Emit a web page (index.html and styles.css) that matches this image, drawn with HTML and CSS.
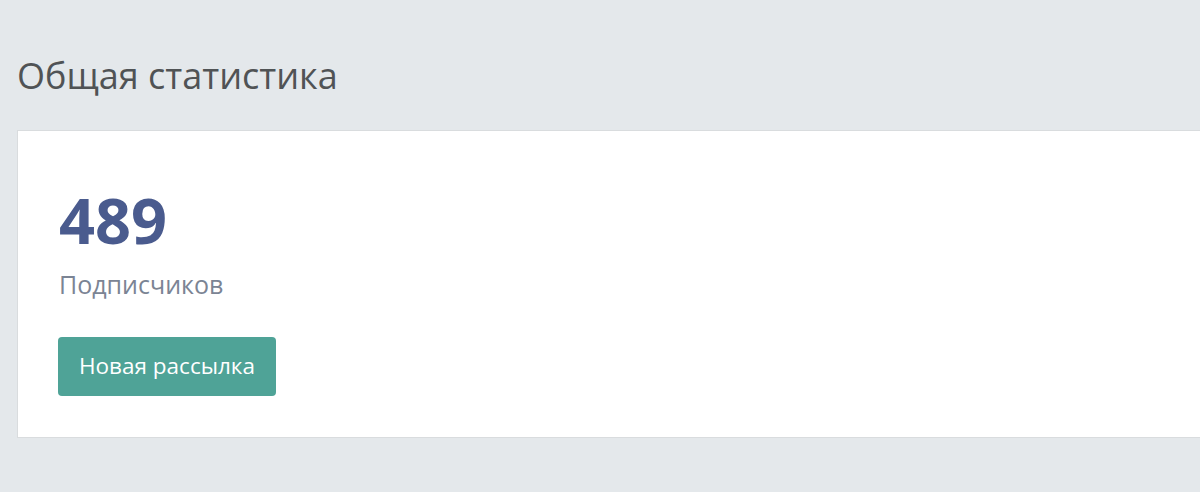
FILE: index.html
```html
<!DOCTYPE html>
<html lang="ru">
<head>
<meta charset="utf-8">
<link rel="stylesheet" href="styles.css">
</head>
<body>
<main class="page">
  <h1 class="page-title">Общая статистика</h1>
  <section class="card">
    <div class="stat-number">489</div>
    <div class="stat-label">Подписчиков</div>
    <button class="btn-primary" type="button">Новая рассылка</button>
  </section>
</main>
</body>
</html>
```

FILE: styles.css
```css
html, body {
  margin: 0;
  padding: 0;
  background: #e4e8eb;
  font-family: "Open Sans", "Liberation Sans", sans-serif;
}

.page {
  padding: 54px 0 0 17px;
  overflow: hidden;
  height: 492px;
  box-sizing: border-box;
}

.page-title {
  margin: 0 0 33px 0;
  font-size: 36px;
  font-weight: 400;
  line-height: 1.2;
  color: #505355;
}

.card {
  background: #fff;
  border: 1px solid #d9dcde;
  width: calc(100% + 20px);
  box-sizing: border-box;
  padding: 57px 41px 41px 40px;
  display: flex;
  flex-direction: column;
  align-items: flex-start;
}

.stat-number {
  margin-left: 1px;
  font-size: 63px;
  font-weight: 700;
  line-height: 1;
  color: #4a5b8e;
}

.stat-label {
  margin-left: 1px;
  margin-top: 18px;
  font-size: 25px;
  line-height: 1.2;
  color: #7b8494;
}

.btn-primary {
  margin-top: 38px;
  height: 59px;
  padding: 0 21px;
  border: 0;
  border-radius: 4px;
  background: #4fa397;
  color: #fff;
  font-family: "Open Sans", "Liberation Sans", sans-serif;
  font-size: 22.5px;
  line-height: 1;
}
```
